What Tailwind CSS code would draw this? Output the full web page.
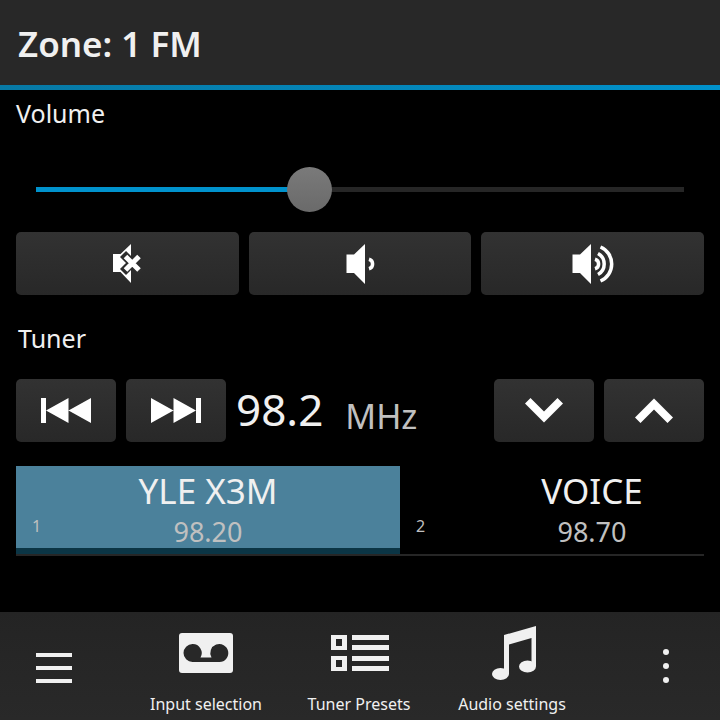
<!DOCTYPE html>
<html lang="en">
<head>
<meta charset="utf-8">
<meta name="viewport" content="width=device-width, initial-scale=1">
<title>Zone: 1 FM</title>
<script src="https://cdn.jsdelivr.net/npm/@tailwindcss/browser@4"></script>
</head>
<body class="flex min-h-screen flex-col overflow-x-hidden bg-black font-['Noto_Sans',sans-serif] text-[#f0f0f0]">
  <header class="bg-[#282828]">
    <h1 class="px-[18px] pt-[3px] text-[35px] leading-[82px] font-semibold">Zone: 1 FM</h1>
    <div class="h-[5px] bg-linear-to-r from-[#0779a5] to-[#0092cc]"></div>
  </header>

  <main class="flex-1 px-4">
    <section>
      <label for="volume" class="block text-[25px] leading-[46px]">Volume</label>
      <div class="mt-[31px] px-5">
        <input id="volume" type="range" min="0" max="100" step="any" value="41.7"
          class="block h-[45px] w-full appearance-none bg-transparent [&::-webkit-slider-runnable-track]:h-[5px] [&::-webkit-slider-runnable-track]:bg-[linear-gradient(to_right,#0092cc_42%,#262626_42%)] [&::-webkit-slider-thumb]:-mt-5 [&::-webkit-slider-thumb]:h-[45px] [&::-webkit-slider-thumb]:w-[45px] [&::-webkit-slider-thumb]:appearance-none [&::-webkit-slider-thumb]:rounded-full [&::-webkit-slider-thumb]:bg-linear-to-b [&::-webkit-slider-thumb]:from-[#7a7a7a] [&::-webkit-slider-thumb]:to-[#6a6a6a]">
      </div>
      <div class="mt-5 grid grid-cols-3 gap-[10px]">
        <button type="button" aria-label="Mute" class="flex h-[63px] items-center justify-center rounded-[5px] bg-linear-to-b from-[#323232] to-[#282828]">
          <svg width="48" height="48" viewBox="0 0 48 48" fill="none">
            <path d="M10 14H17.500L28 4V43L17.500 32H10Z" fill="#fff"/>
            <path d="M20 14L38 32M38 14L20 32" stroke="#2d2d2d" stroke-width="8.500"/>
            <path d="M22.500 16.500L36 30M36 16.500L22.500 30" stroke="#fff" stroke-width="5"/>
          </svg>
        </button>
        <button type="button" aria-label="Volume down" class="flex h-[63px] items-center justify-center rounded-[5px] bg-linear-to-b from-[#323232] to-[#282828]">
          <svg width="48" height="48" viewBox="0 0 48 48" fill="none">
            <path d="M10.500 14.500H18L29 4V44L18 33H10.500Z" fill="#fff"/>
            <path d="M33 19.200A5 5 0 0 1 33 28.800" stroke="#fff" stroke-width="3.500"/>
          </svg>
        </button>
        <button type="button" aria-label="Volume up" class="flex h-[63px] items-center justify-center rounded-[5px] bg-linear-to-b from-[#323232] to-[#282828]">
          <svg width="48" height="48" viewBox="0 0 48 48" fill="none">
            <path d="M3.500 14.500H11L22 4V44L11 33H3.500Z" fill="#fff"/>
            <path d="M26 19.200A5 5 0 0 1 26 28.800M29 13.500A12 12 0 0 1 29 34.500M31.500 7A18.500 18.500 0 0 1 31.500 41" stroke="#fff" stroke-width="3.500"/>
          </svg>
        </button>
      </div>
    </section>

    <section class="mt-5">
      <h2 class="px-[2px] text-[25px] leading-[46px]">Tuner</h2>
      <div class="mt-[18px] flex items-center gap-[10px]">
        <button type="button" aria-label="Previous station" class="flex h-[63px] w-[100px] items-center justify-center rounded-[5px] bg-linear-to-b from-[#323232] to-[#282828]">
          <svg width="50" height="25" viewBox="0 0 50 25" fill="#fff"><path d="M0 0H5V25H0ZM27.500 0V25L5 12.500ZM50 0V25L27.500 12.500Z"/></svg>
        </button>
        <button type="button" aria-label="Next station" class="flex h-[63px] w-[100px] items-center justify-center rounded-[5px] bg-linear-to-b from-[#323232] to-[#282828]">
          <svg width="50" height="25" viewBox="0 0 50 25" fill="#fff"><path d="M45 0H50V25H45ZM0 0L22.500 12.500L0 25ZM22.500 0L45 12.500L22.500 25Z"/></svg>
        </button>
        <p class="flex flex-1 items-center gap-[22px]">
          <span class="pb-[3px] text-[44px] leading-[56px]">98.2</span>
          <span class="pt-[10px] text-[34px] leading-[44px] text-[#c0c0c0]">MHz</span>
        </p>
        <button type="button" aria-label="Frequency down" class="flex h-[63px] w-[100px] items-center justify-center rounded-[5px] bg-linear-to-b from-[#323232] to-[#282828]">
          <svg width="38" height="25" viewBox="0 0 38 25" fill="#fff"><path d="M0 5.500L5.500 0L19 13.500L32.500 0L38 5.500L19 24.500Z"/></svg>
        </button>
        <button type="button" aria-label="Frequency up" class="flex h-[63px] w-[100px] items-center justify-center rounded-[5px] bg-linear-to-b from-[#323232] to-[#282828]">
          <svg width="38" height="25" viewBox="0 0 38 25" fill="#fff"><path d="M0 19.500L5.500 25L19 11.500L32.500 25L38 19.500L19 0.500Z"/></svg>
        </button>
      </div>
    </section>

    <ul class="mt-6 flex overflow-hidden border-b-2 border-[#262626]">
      <li class="w-[384px] shrink-0">
        <button type="button" class="grid w-full grid-cols-[32px_1fr_32px] border-b-6 border-[#0b3545] bg-[#4b819b]">
          <span class="self-end pl-4 text-left text-[16px] leading-[44px] text-[#c0c0c0]">1</span>
          <span class="flex flex-col text-center">
            <span class="text-[35px] leading-[50px]">YLE X3M</span>
            <span class="text-[27px] leading-[32px] text-[#c0c0c0]">98.20</span>
          </span>
        </button>
      </li>
      <li class="w-[384px] shrink-0">
        <button type="button" class="grid w-full grid-cols-[32px_1fr_32px] border-b-6 border-transparent">
          <span class="self-end pl-4 text-left text-[16px] leading-[44px] text-[#c0c0c0]">2</span>
          <span class="flex flex-col text-center">
            <span class="text-[35px] leading-[50px]">VOICE</span>
            <span class="text-[27px] leading-[32px] text-[#c0c0c0]">98.70</span>
          </span>
        </button>
      </li>
    </ul>
  </main>

  <footer class="flex justify-between bg-linear-to-b from-[#242424] to-[#292929]">
    <button type="button" aria-label="Menu" class="flex w-[108px] items-center justify-center pt-1">
      <svg width="36" height="30" viewBox="0 0 36 30" fill="#f0f0f0"><path d="M0 0H36V4H0ZM0 13H36V17H0ZM0 26H36V30H0Z"/></svg>
    </button>
    <nav class="grid grid-cols-[153px_153px_153px] pr-[2px]">
      <button type="button" class="flex flex-col items-center">
        <svg width="60" height="76" viewBox="0 0 60 76">
          <rect x="3" y="21" width="54" height="40" rx="3" fill="#f0f0f0"/>
          <path d="M16.500 32A9 9 0 0 1 24.500 45.500H35.500A9 9 0 1 1 43.500 50H16.500A9 9 0 0 1 16.500 32Z" fill="#282828"/>
        </svg>
        <span class="text-[16px] leading-8">Input selection</span>
      </button>
      <button type="button" class="flex flex-col items-center">
        <svg width="60" height="76" viewBox="0 0 60 76" fill="#f0f0f0" fill-rule="evenodd">
          <path d="M2 23H18V38H2ZM7 27V34H13V27ZM2 44H18V59H2ZM7 48V55H13V48ZM23 23H60V28H23ZM23 33H60V38H23ZM23 44H60V49H23ZM23 54H60V59H23Z"/>
        </svg>
        <span class="text-[16px] leading-8">Tuner Presets</span>
      </button>
      <button type="button" class="flex flex-col items-center">
        <svg width="60" height="76" viewBox="0 0 60 76" fill="#f0f0f0">
          <path d="M22 23L54 14V54H49.500V26L27 32.500V62H22Z"/>
          <ellipse cx="18.500" cy="62" rx="8.500" ry="6"/>
          <ellipse cx="45.500" cy="54.500" rx="8.500" ry="6"/>
        </svg>
        <span class="text-[16px] leading-8">Audio settings</span>
      </button>
    </nav>
    <button type="button" aria-label="More" class="flex w-[108px] items-center justify-center">
      <svg width="6" height="34" viewBox="0 0 6 34" fill="#f0f0f0"><circle cx="3" cy="3" r="3"/><circle cx="3" cy="17" r="3"/><circle cx="3" cy="31" r="3"/></svg>
    </button>
  </footer>
</body>
</html>
